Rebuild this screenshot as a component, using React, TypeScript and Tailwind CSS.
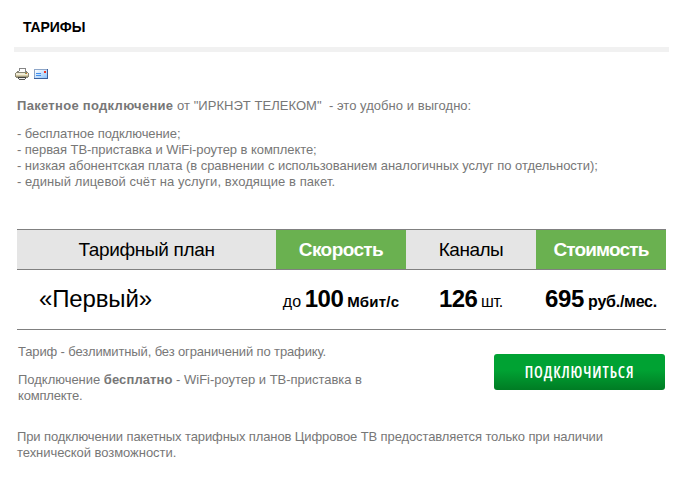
import type { ReactNode } from 'react';

function PrintIcon() {
  return (
    <svg className="w-[14px] h-3" viewBox="0 0 14 12" shapeRendering="crispEdges">
      <path d="M4 0h7v4h-1v1H3V3h1z" fill="#858585" />
      <path d="M5 1h5v3H4V3h1z" fill="#fff" />
      <path d="M2 3h1v1h8V3h1v1h1v1h1v4h-1v1H1V9H0V5h1V4h1z" fill="#8a8774" />
      <path d="M1 5h12v3H1z" fill="#f1ecd6" />
      <path d="M1 7h12v1H1z" fill="#d6cba5" />
      <path d="M10 5h1v1h-1z" fill="#7dab52" />
      <path d="M11 5h1v1h-1z" fill="#e06a2c" />
      <path d="M1 8h12v1H1z" fill="#a39c80" />
      <path d="M3 9h8v1H3z" fill="#44433f" />
      <path d="M3 10h1v1h6v-1h1v1h-1v1H4v-1H3z" fill="#5c5b57" />
      <path d="M4 10h6v1H4z" fill="#efefef" />
    </svg>
  );
}

function MailIcon() {
  return (
    <svg className="w-[14px] h-[10px]" viewBox="0 0 14 10" shapeRendering="crispEdges">
      <defs>
        <linearGradient id="mail" x1="0" y1="0" x2="1" y2="1">
          <stop offset="0" stopColor="#ffffff" />
          <stop offset="1" stopColor="#8fc3fa" />
        </linearGradient>
      </defs>
      <path d="M0 0h14v10H0z" fill="#8ea6c8" />
      <path d="M1 1h12v8H1z" fill="url(#mail)" />
      <path d="M13 0h1v10H0V9h13z" fill="#3a5f9c" />
      <path d="M2 4h5v1H2zM2 6h5v1H2z" fill="#3f8fee" />
      <path d="M10 2h2v2h-2z" fill="#f03420" />
    </svg>
  );
}

function Line({ className, children }: { className: string; children: ReactNode }) {
  return <span className={`block whitespace-pre ${className}`}>{children}</span>;
}

export default function App() {
  return (
    <main className="w-[692px] h-[491px] overflow-hidden bg-white pl-[14px] font-['Liberation_Sans',Arial,sans-serif] text-[13px] leading-4 text-[#777]">
      <header className="h-[52px] w-[655px] border-b-[5px] border-[#f1f1f1] pl-[9px] pt-[19px]">
        <h1 className="text-[14px] font-bold leading-4 tracking-[-0.1px] text-black">ТАРИФЫ</h1>
      </header>

      <div className="mt-4 flex h-[13px] items-start gap-[5px] pl-px">
        <PrintIcon />
        <div className="pt-px">
          <MailIcon />
        </div>
      </div>

      <section className="pl-[3px] pt-[17px]">
        <p>
          <Line className="tracking-[0.04px]">
            <b className="tracking-[0.3px]">Пакетное подключение</b> от "ИРКНЭТ ТЕЛЕКОМ"{'  '}- это удобно и выгодно:
          </Line>
        </p>
        <p className="mt-3">
          <Line className="tracking-[-0.08px]">- бесплатное подключение;</Line>
          <Line className="tracking-[-0.06px]">- первая ТВ-приставка и WiFi-роутер в комплекте;</Line>
          <Line className="tracking-[-0.04px]">- низкая абонентская плата (в сравнении с использованием аналогичных услуг по отдельности);</Line>
          <Line className="tracking-[0.07px]">- единый лицевой счёт на услуги, входящие в пакет.</Line>
        </p>
      </section>

      <table className="ml-[3px] mt-[39px] w-[649px] table-fixed border-collapse text-center text-black">
        <colgroup>
          <col className="w-[259px]" />
          <col className="w-[130px]" />
          <col className="w-[130px]" />
          <col className="w-[130px]" />
        </colgroup>
        <thead>
          <tr className="h-10 border-y border-[#808080] text-[19px]">
            <th className="bg-[#e5e5e5] p-0 font-normal tracking-[-0.35px]">Тарифный план</th>
            <th className="bg-[#6ab150] p-0 font-bold tracking-[-0.6px] text-white">Скорость</th>
            <th className="bg-[#e5e5e5] p-0 font-normal tracking-[-0.5px]">Каналы</th>
            <th className="bg-[#6ab150] p-0 font-bold tracking-[-0.85px] text-white">Стоимость</th>
          </tr>
        </thead>
        <tbody>
          <tr className="h-[60px] whitespace-nowrap border-b border-[#808080]">
            <td className="p-0 pb-[2px] pl-[22px] text-left text-2xl tracking-[-0.15px]">«Первый»</td>
            <td className="p-0 pb-px text-[13px]">
              <span className="text-[16px]">до</span> <b className="text-2xl tracking-[-0.4px]">100</b> <b className="text-[15px] tracking-[0.2px]">Мбит/с</b>
            </td>
            <td className="p-0 pb-px text-[13px]">
              <b className="text-2xl tracking-[-0.6px]">126</b> <span className="text-base tracking-[-0.3px]">шт.</span>
            </td>
            <td className="p-0 pb-px text-base tracking-[-0.25px]">
              <b className="text-2xl tracking-[-0.4px]">695</b> <b>руб./мес.</b>
            </td>
          </tr>
        </tbody>
      </table>

      <section className="ml-[4px] flex h-[99px] w-[648px] items-start justify-between pt-[14px]">
        <div>
          <p>
            <Line className="tracking-[-0.13px]">Тариф - безлимитный, без ограничений по трафику.</Line>
          </p>
          <p className="mt-3">
            <Line className="tracking-[-0.02px]">
              Подключение <b className="tracking-[0.1px]">бесплатно</b> - WiFi-роутер и ТВ-приставка в
            </Line>
            <Line className="tracking-[-0.2px]">комплекте.</Line>
          </p>
        </div>
        <button className="mr-px mt-[10px] h-9 w-[171px] rounded-[3px] bg-linear-to-b from-[#00a233] from-45% to-[#007c24] font-['Open_Sans',sans-serif] text-[15.5px] font-semibold tracking-[0.9px] text-white [font-stretch:80%]">
          ПОДКЛЮЧИТЬСЯ
        </button>
      </section>

      <p className="pl-[3px]">
        <Line className="tracking-[-0.11px]">При подключении пакетных тарифных планов Цифровое ТВ предоставляется только при наличии</Line>
        <Line className="tracking-[-0.05px]">технической возможности.</Line>
      </p>
    </main>
  );
}
